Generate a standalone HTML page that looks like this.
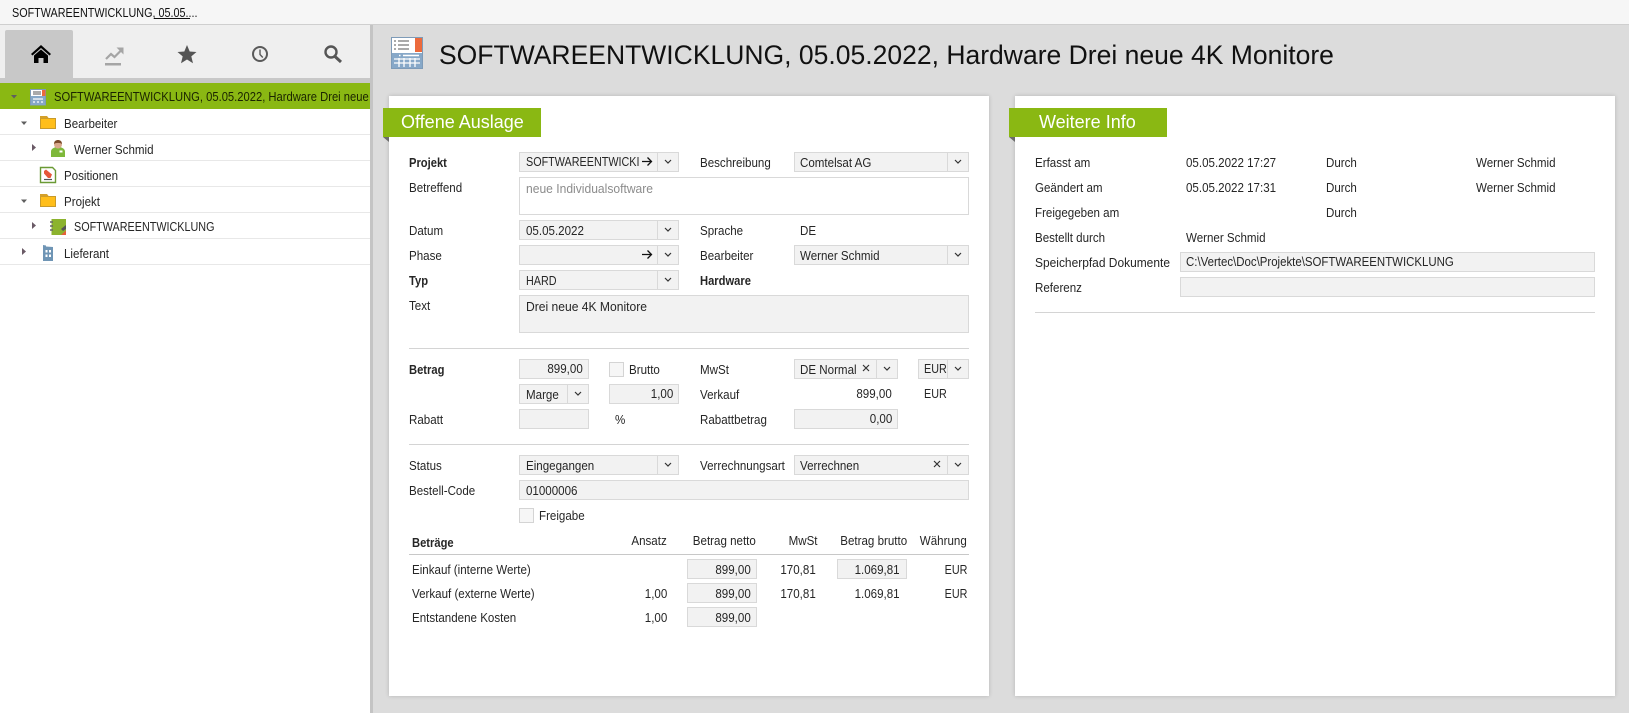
<!DOCTYPE html>
<html lang="de"><head><meta charset="utf-8"><title>SOFTWAREENTWICKLUNG</title>
<style>
html,body{margin:0;padding:0}
body{width:1629px;height:713px;overflow:hidden;background:#dcdcdc;position:relative;font-family:"Liberation Sans",sans-serif;color:#262626}
div,svg{position:absolute}
.b{background:#f2f2f2;border:1px solid #d9d9d9;box-sizing:border-box;height:20px}
.d{width:1px;height:20px;background:#d9d9d9}
.t{white-space:nowrap;font-size:13px;line-height:16px;transform:scaleX(.89);transform-origin:0 0}
.c{transform:scaleX(.83)}
.r{transform-origin:100% 0}
.bd{font-weight:bold;transform:scaleX(.86)}
.h{height:1px;background:#d4d4d4}
.l{height:1px;background:#e8e8e8;left:0;width:370px}
.p{background:#fff;top:96px;width:600px;height:600px;box-shadow:0 0 4px rgba(0,0,0,.18)}
.g{background:#8ab813;top:108px;width:158px;height:29px}
.gt{color:#fff;font-size:18px;line-height:24px;top:110px;white-space:nowrap}
.cb{background:#f6f6f6;border:1px solid #d4d4d4;box-sizing:border-box;width:15px;height:15px}
</style></head><body>

<!-- top bar -->
<div style="left:0;top:0;width:1629px;height:24px;background:#f6f6f6;border-bottom:1px solid #cfcfcf;box-sizing:content-box"></div>
<div class="t c" style="left:12px;top:5px;color:#111">SOFTWAREENTWICKLUNG, 05.05....</div>
<div style="left:154px;top:18px;width:36px;height:1px;background:#111"></div>

<!-- sidebar -->
<div style="left:0;top:25px;width:370px;height:53px;background:#efefef"></div>
<div style="left:5px;top:30px;width:68px;height:48px;background:#c8c8c8;border-radius:2px 2px 0 0"></div>
<div style="left:0;top:78px;width:370px;height:5px;background:#c8c8c8"></div>
<div style="left:370px;top:25px;width:3px;height:688px;background:#c4c4c4"></div>
<div style="left:0;top:83px;width:370px;height:630px;background:#fff"></div>
<div style="left:0;top:83px;width:370px;height:26px;background:#8ab813;overflow:hidden">
  <div class="t" style="left:54px;top:6px;color:#1a2400;transform:scaleX(.862)">SOFTWAREENTWICKLUNG, 05.05.2022, Hardware Drei neue 4K Monitore</div>
</div>
<div class="l" style="top:134px"></div><div class="l" style="top:160px"></div><div class="l" style="top:186px"></div>
<div class="l" style="top:212px"></div><div class="l" style="top:238px"></div><div class="l" style="top:264px"></div>
<div class="t" style="left:64px;top:116px">Bearbeiter</div>
<div class="t" style="left:74px;top:142px">Werner Schmid</div>
<div class="t" style="left:64px;top:168px">Positionen</div>
<div class="t" style="left:64px;top:194px">Projekt</div>
<div class="t c" style="left:74px;top:219px">SOFTWAREENTWICKLUNG</div>
<div class="t" style="left:64px;top:246px">Lieferant</div>

<!-- main title -->
<div style="left:439px;top:38px;font-size:27px;line-height:34px;white-space:nowrap;color:#111;transform:scaleX(.982);transform-origin:0 0">SOFTWAREENTWICKLUNG, 05.05.2022, Hardware Drei neue 4K Monitore</div>

<!-- panels -->
<div class="p" style="left:389px"></div>
<div class="p" style="left:1015px"></div>
<div class="g" style="left:383px"></div>
<div class="g" style="left:1009px"></div>
<div class="gt" style="left:401px">Offene Auslage</div>
<div class="gt" style="left:1039px">Weitere Info</div>

<!-- left form boxes -->
<div class="b" style="left:519px;top:152px;width:160px"></div><div class="d" style="left:657px;top:152px"></div>
<div class="b" style="left:794px;top:152px;width:175px"></div><div class="d" style="left:947px;top:152px"></div>
<div class="b" style="left:519px;top:177px;width:450px;height:38px;background:#fff"></div>
<div class="b" style="left:519px;top:220px;width:160px"></div><div class="d" style="left:657px;top:220px"></div>
<div class="b" style="left:519px;top:245px;width:160px"></div><div class="d" style="left:657px;top:245px"></div>
<div class="b" style="left:794px;top:245px;width:175px"></div><div class="d" style="left:947px;top:245px"></div>
<div class="b" style="left:519px;top:270px;width:160px"></div><div class="d" style="left:657px;top:270px"></div>
<div class="b" style="left:519px;top:295px;width:450px;height:38px"></div>
<div class="h" style="left:409px;top:348px;width:560px"></div>
<div class="b" style="left:519px;top:359px;width:70px"></div>
<div class="cb" style="left:609px;top:362px"></div>
<div class="b" style="left:794px;top:359px;width:104px"></div><div class="d" style="left:876px;top:359px"></div>
<div class="b" style="left:918px;top:359px;width:51px"></div><div class="d" style="left:947px;top:359px"></div>
<div class="b" style="left:519px;top:384px;width:70px"></div><div class="d" style="left:567px;top:384px"></div>
<div class="b" style="left:609px;top:384px;width:70px"></div>
<div class="b" style="left:519px;top:409px;width:70px"></div>
<div class="b" style="left:794px;top:409px;width:104px"></div>
<div class="h" style="left:409px;top:444px;width:560px"></div>
<div class="b" style="left:519px;top:455px;width:160px"></div><div class="d" style="left:657px;top:455px"></div>
<div class="b" style="left:794px;top:455px;width:175px"></div><div class="d" style="left:947px;top:455px"></div>
<div class="b" style="left:519px;top:480px;width:450px"></div>
<div class="cb" style="left:519px;top:508px"></div>
<div class="h" style="left:409px;top:554px;width:560px;background:#c8c8c8"></div>
<div class="b" style="left:687px;top:559px;width:70px"></div>
<div class="b" style="left:837px;top:559px;width:70px"></div>
<div class="b" style="left:687px;top:583px;width:70px"></div>
<div class="b" style="left:687px;top:607px;width:70px"></div>

<!-- right form boxes -->
<div class="b" style="left:1180px;top:252px;width:415px"></div>
<div class="b" style="left:1180px;top:277px;width:415px"></div>
<div class="h" style="left:1035px;top:312px;width:560px"></div>

<!-- left form text -->
<div class="t bd" style="left:409px;top:155px">Projekt</div>
<div class="t c" style="left:525.500px;top:154px">SOFTWAREENTWICKI</div>
<div class="t" style="left:699.500px;top:155px">Beschreibung</div>
<div class="t" style="left:800px;top:155px">Comtelsat AG</div>
<div class="t" style="left:409px;top:180px">Betreffend</div>
<div class="t" style="left:525.500px;top:181px;color:#8c8c8c;transform:scaleX(.93)">neue Individualsoftware</div>
<div class="t" style="left:409px;top:223px">Datum</div>
<div class="t" style="left:525.500px;top:223px">05.05.2022</div>
<div class="t" style="left:699.500px;top:223px">Sprache</div>
<div class="t" style="left:800px;top:223px">DE</div>
<div class="t" style="left:409px;top:248px">Phase</div>
<div class="t" style="left:699.500px;top:248px">Bearbeiter</div>
<div class="t" style="left:800px;top:248px">Werner Schmid</div>
<div class="t bd" style="left:409px;top:273px">Typ</div>
<div class="t c" style="left:525.500px;top:273px">HARD</div>
<div class="t bd" style="left:699.500px;top:273px">Hardware</div>
<div class="t" style="left:409px;top:298px">Text</div>
<div class="t" style="left:525.500px;top:299px;transform:scaleX(.93)">Drei neue 4K Monitore</div>
<div class="t bd" style="left:409px;top:362px">Betrag</div>
<div class="t r" style="right:1046px;top:361px">899,00</div>
<div class="t" style="left:629px;top:362px">Brutto</div>
<div class="t" style="left:699.500px;top:362px">MwSt</div>
<div class="t" style="left:800px;top:362px">DE Normal</div>
<div class="t c" style="left:924px;top:361px">EUR</div>
<div class="t" style="left:525.500px;top:387px">Marge</div>
<div class="t r" style="right:956px;top:386px">1,00</div>
<div class="t" style="left:699.500px;top:387px">Verkauf</div>
<div class="t r" style="right:737px;top:386px">899,00</div>
<div class="t c" style="left:924px;top:386px">EUR</div>
<div class="t" style="left:409px;top:412px">Rabatt</div>
<div class="t" style="left:615px;top:412px">%</div>
<div class="t" style="left:699.500px;top:412px">Rabattbetrag</div>
<div class="t r" style="right:737px;top:411px">0,00</div>
<div class="t" style="left:409px;top:458px">Status</div>
<div class="t" style="left:525.500px;top:458px">Eingegangen</div>
<div class="t" style="left:699.500px;top:458px">Verrechnungsart</div>
<div class="t" style="left:800px;top:458px">Verrechnen</div>
<div class="t" style="left:409px;top:483px">Bestell-Code</div>
<div class="t" style="left:525.500px;top:483px">01000006</div>
<div class="t" style="left:539px;top:508px">Freigabe</div>
<div class="t bd" style="left:411.500px;top:535px">Beträge</div>
<div class="t r" style="right:962px;top:533px">Ansatz</div>
<div class="t r" style="right:873px;top:533px">Betrag netto</div>
<div class="t r" style="right:812px;top:533px">MwSt</div>
<div class="t r" style="right:722px;top:533px">Betrag brutto</div>
<div class="t r" style="right:662px;top:533px">Währung</div>
<div class="t" style="left:411.500px;top:562px">Einkauf (interne Werte)</div>
<div class="t r" style="right:878px;top:562px">899,00</div>
<div class="t r" style="right:813px;top:562px">170,81</div>
<div class="t r" style="right:729px;top:562px">1.069,81</div>
<div class="t r c" style="right:662px;top:562px">EUR</div>
<div class="t" style="left:411.500px;top:586px">Verkauf (externe Werte)</div>
<div class="t r" style="right:962px;top:586px">1,00</div>
<div class="t r" style="right:878px;top:586px">899,00</div>
<div class="t r" style="right:813px;top:586px">170,81</div>
<div class="t r" style="right:729px;top:586px">1.069,81</div>
<div class="t r c" style="right:662px;top:586px">EUR</div>
<div class="t" style="left:411.500px;top:610px">Entstandene Kosten</div>
<div class="t r" style="right:962px;top:610px">1,00</div>
<div class="t r" style="right:878px;top:610px">899,00</div>

<!-- right form text -->
<div class="t" style="left:1035px;top:155px">Erfasst am</div>
<div class="t" style="left:1186px;top:155px">05.05.2022 17:27</div>
<div class="t" style="left:1326px;top:155px">Durch</div>
<div class="t" style="left:1476px;top:155px">Werner Schmid</div>
<div class="t" style="left:1035px;top:180px">Geändert am</div>
<div class="t" style="left:1186px;top:180px">05.05.2022 17:31</div>
<div class="t" style="left:1326px;top:180px">Durch</div>
<div class="t" style="left:1476px;top:180px">Werner Schmid</div>
<div class="t" style="left:1035px;top:205px">Freigegeben am</div>
<div class="t" style="left:1326px;top:205px">Durch</div>
<div class="t" style="left:1035px;top:230px">Bestellt durch</div>
<div class="t" style="left:1186px;top:230px">Werner Schmid</div>
<div class="t" style="left:1035px;top:255px;transform:scaleX(.92)">Speicherpfad Dokumente</div>
<div class="t" style="left:1186px;top:254px;transform:scaleX(.88)">C:\Vertec\Doc\Projekte\SOFTWAREENTWICKLUNG</div>
<div class="t" style="left:1035px;top:280px">Referenz</div>

<!-- icons -->
<svg width="1629" height="713" viewBox="0 0 1629 713" style="left:0;top:0">
  <!-- tag corners -->
  <path d="M383 137h6v5z" fill="#6b6b6b"/><path d="M1009 137h6v5z" fill="#6b6b6b"/>
  <!-- chevrons -->
  <g fill="none" stroke="#333" stroke-width="1.2">
    <path d="M665 160l3 3 3-3"/><path d="M955 160l3 3 3-3"/><path d="M665 228l3 3 3-3"/><path d="M665 253l3 3 3-3"/>
    <path d="M665 278l3 3 3-3"/><path d="M955 253l3 3 3-3"/><path d="M884 367l3 3 3-3"/><path d="M955 367l3 3 3-3"/>
    <path d="M575 392l3 3 3-3"/><path d="M665 463l3 3 3-3"/><path d="M955 463l3 3 3-3"/>
  </g>
  <!-- arrows -->
  <g fill="none" stroke="#111" stroke-width="1.3">
    <path d="M642 161.500h9M647.500 157.500l4 4-4 4"/><path d="M642 254.500h9M647.500 250.500l4 4-4 4"/>
  </g>
  <!-- clear x -->
  <g fill="none" stroke="#333" stroke-width="1.2">
    <path d="M863 365l6 6M869 365l-6 6"/><path d="M934 461l6 6M940 461l-6 6"/>
  </g>
  <!-- tab: home -->
  <path d="M41 45L31 54l1.500 1.500L41 48l8.500 7.500L51 54z" fill="#000"/>
  <path d="M34 55.500L41 49.500l7 6V63h-4.500v-5h-5v5H34z" fill="#000"/>
  <!-- tab: chart -->
  <path d="M105 63h16v2.500h-16z" fill="#a5a5a5"/>
  <path d="M106 59l5-5 3.500 3 6-6" fill="none" stroke="#a5a5a5" stroke-width="2.200"/>
  <path d="M116.500 47.500h7v7z" fill="#a5a5a5"/>
  <!-- tab: star -->
  <path d="M187 45l2.700 6.500 6.800.5-5.200 4.400 1.700 6.800-6-3.700-6 3.700 1.700-6.800-5.200-4.400 6.800-.5z" fill="#555"/>
  <!-- tab: clock -->
  <circle cx="260" cy="54" r="7" fill="none" stroke="#5a5a5a" stroke-width="2"/>
  <path d="M260 49.500V54.500l2.800 3" fill="none" stroke="#5a5a5a" stroke-width="1.400"/>
  <!-- tab: search -->
  <circle cx="331" cy="52" r="5.500" fill="none" stroke="#555" stroke-width="2.400"/>
  <path d="M335 56.500l6 5.500" stroke="#555" stroke-width="3" fill="none"/>
  <!-- tree carets -->
  <g fill="#5f5f5f">
    <path d="M11 95h6l-3 3.500z"/><path d="M21 121.500h6l-3 3.500z"/><path d="M21 199.500h6l-3 3.500z"/>
  </g>
  <g fill="#6a5a66">
    <path d="M32 144l4 3.500-4 3.500z"/><path d="M32 222l4 3.500-4 3.500z"/><path d="M22 248l4 3.500-4 3.500z"/>
  </g>
  <!-- expense icon (tree) -->
  <g>
    <rect x="30.500" y="89.500" width="15" height="15.500" fill="#fff" stroke="#7e9bb8"/>
    <rect x="42" y="90" width="3.500" height="6" fill="#ec6a3c"/>
    <path d="M33 92h8M33 94h8" stroke="#555" stroke-width="1"/>
    <rect x="31" y="96" width="14" height="9" fill="#87a8c8"/>
    <path d="M33 99h10M33 102h2M37 102h2M41 102h2" stroke="#fff" stroke-width="1.300"/>
  </g>
  <!-- folders -->
  <g>
    <path d="M40.500 118.500h15v10h-15z" fill="#ffbe1a" stroke="#c89a2a"/><path d="M40 116h7l2 2.500h-9z" fill="#d4a02a"/>
    <path d="M40.500 196.500h15v10h-15z" fill="#ffbe1a" stroke="#c89a2a"/><path d="M40 194h7l2 2.500h-9z" fill="#d4a02a"/>
  </g>
  <!-- person -->
  <g>
    <path d="M51 157v-5.500c0-3 3.500-4 5-4.500h4c1.500.5 5 1.500 5 4.500v5.500z" fill="#7eb83a"/>
    <circle cx="58" cy="144.500" r="4" fill="#d9a98c"/>
    <path d="M54 144c0-3 2-4 4-4s4 1 4 4c-2-1.500-6-1.500-8 0z" fill="#7a4a2a"/>
    <rect x="59.500" y="150.500" width="3" height="2" fill="#fff"/>
  </g>
  <!-- Positionen -->
  <g>
    <path d="M40.500 167.500h12l3 3v12h-15z" fill="#fff" stroke="#6a9a35" stroke-width="1.400"/>
    <path d="M44 171l2-1.500 6 5-1.500 3.500-2.500 0-4-4.500z" fill="#e5583a"/>
    <path d="M44 179.500h8" stroke="#555" stroke-width="1.200"/>
  </g>
  <!-- book -->
  <g>
    <rect x="51.500" y="219" width="14.500" height="16" fill="#8cb32e"/>
    <path d="M50 222h3M50 226h3M50 230h3" stroke="#666" stroke-width="1.600"/>
    <path d="M61 235l5-4.500v4.500z" fill="#e5603a"/>
    <path d="M61 229l5-4v4l-3 2z" fill="#555"/>
  </g>
  <!-- building -->
  <g>
    <path d="M43 245l3 .5 0 1 7 .5v14H43z" fill="#6f95b5"/>
    <path d="M45.500 250h2v2.500h-2zM49 250h2v2.500h-2zM45.500 254.500h2v2.500h-2zM49 254.500h2v2.500h-2z" fill="#fff"/>
  </g>
  <!-- title icon -->
  <g>
    <rect x="391.500" y="37.500" width="31" height="31" fill="#fff" stroke="#7e9bb8"/>
    <rect x="415" y="38" width="7" height="14" fill="#ec6a3c"/>
    <path d="M394 41h2M398 41h11M394 45h2M398 45h11M394 49h2M398 49h11" stroke="#555" stroke-width="1.100"/>
    <rect x="392" y="53" width="30" height="15" fill="#87a8c8"/>
    <path d="M399 55.500h1.500M403 55.500h16" stroke="#fff" stroke-width="1.500"/>
    <path d="M394 59h26M394 63h26M399 58v9M404 58v9M410 58v9M415 58v9" stroke="#fff" stroke-width="1.300"/>
  </g>
</svg>
</body></html>
